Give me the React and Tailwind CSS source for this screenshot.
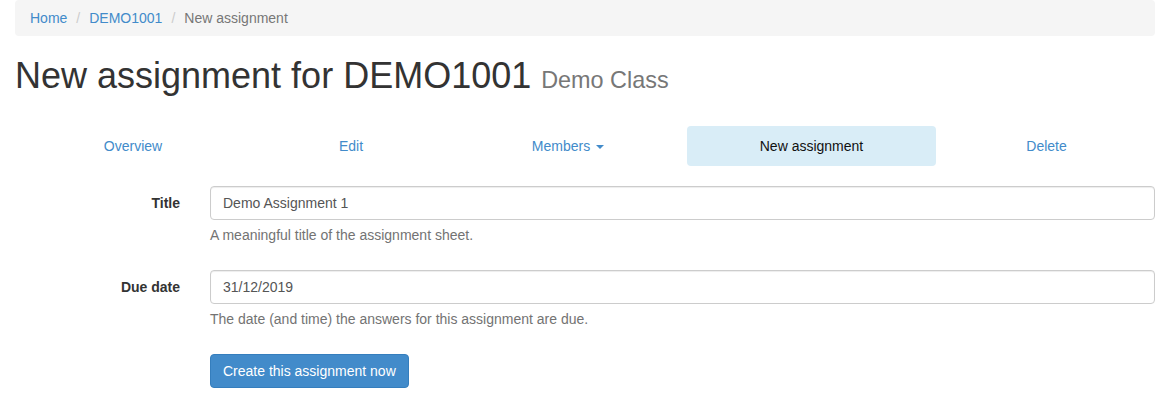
import React from 'react';

const navItems = [
  { label: 'Overview', w: 'w-[236px]' },
  { label: 'Edit', w: 'w-[196px]' },
  { label: 'Members', w: 'w-[234px]', caret: true },
  { label: 'New assignment', w: 'w-[249px]', active: true },
  { label: 'Delete', w: 'w-[217px]' },
];

const FormGroup = ({ label, value, help }) => (
  <div className="flex mb-[15px]">
    <label className="w-[195px] shrink-0 px-[15px] pt-[7px] text-right font-bold">{label}</label>
    <div className="flex-1 px-[15px]">
      <input
        readOnly
        value={value}
        className="block w-full h-[34px] px-[12px] py-[6px] border border-[#ccc] rounded-[4px] bg-white text-[#555] text-[14px] leading-[20px] shadow-[inset_0_1px_1px_rgba(0,0,0,0.075)] outline-none"
      />
      <p className="mt-[5px] mb-[10px] text-[#737373]">{help}</p>
    </div>
  </div>
);

const App = () => {
  return (
    <div className="min-h-screen bg-white font-['Liberation_Sans',Arial,sans-serif] text-[14px] leading-[20px] text-[#333]">
      <div className="w-[1170px] px-[15px]">
        {/* breadcrumb */}
        <ol className="flex mb-[20px] px-[15px] py-[8px] bg-[#f5f5f5] rounded-[4px]">
          <li><a className="text-[#428bca]">Home</a></li>
          <li className="px-[9px] text-[#ccc]">/</li>
          <li><a className="text-[#428bca]">DEMO1001</a></li>
          <li className="px-[9px] text-[#ccc]">/</li>
          <li className="text-[#777]">New assignment</li>
        </ol>

        <h1 className="mt-[20px] mb-[30px] text-[36px] leading-[1.1] font-medium">
          New assignment for DEMO1001 <small className="text-[23.4px] text-[#777] font-normal">Demo Class</small>
        </h1>

        {/* tabs */}
        <ul className="flex gap-[2px] mb-[20px]">
          {navItems.map((item) => (
            <li
              key={item.label}
              className={`${item.w} py-[10px] text-center rounded-[4px] ${item.active ? 'bg-[#d9edf7] text-[#111]' : 'text-[#428bca]'}`}
            >
              {item.label}
              {item.caret && (
                <span className="inline-block ml-[6px] align-middle w-0 h-0 border-x-[4px] border-x-transparent border-t-[4px] border-t-[#428bca]" />
              )}
            </li>
          ))}
        </ul>

        {/* form */}
        <form className="-mx-[15px]">
          <FormGroup label="Title" value="Demo Assignment 1" help="A meaningful title of the assignment sheet." />
          <FormGroup label="Due date" value="31/12/2019" help="The date (and time) the answers for this assignment are due." />
          <div className="flex mb-[15px]">
            <div className="w-[195px] shrink-0" />
            <div className="px-[15px]">
              <button
                type="button"
                className="h-[34px] px-[12px] py-[6px] bg-[#428bca] border border-[#357ebd] rounded-[4px] text-white text-[14px] leading-[20px]"
              >
                Create this assignment now
              </button>
            </div>
          </div>
        </form>
      </div>
    </div>
  );
};

export default App;
